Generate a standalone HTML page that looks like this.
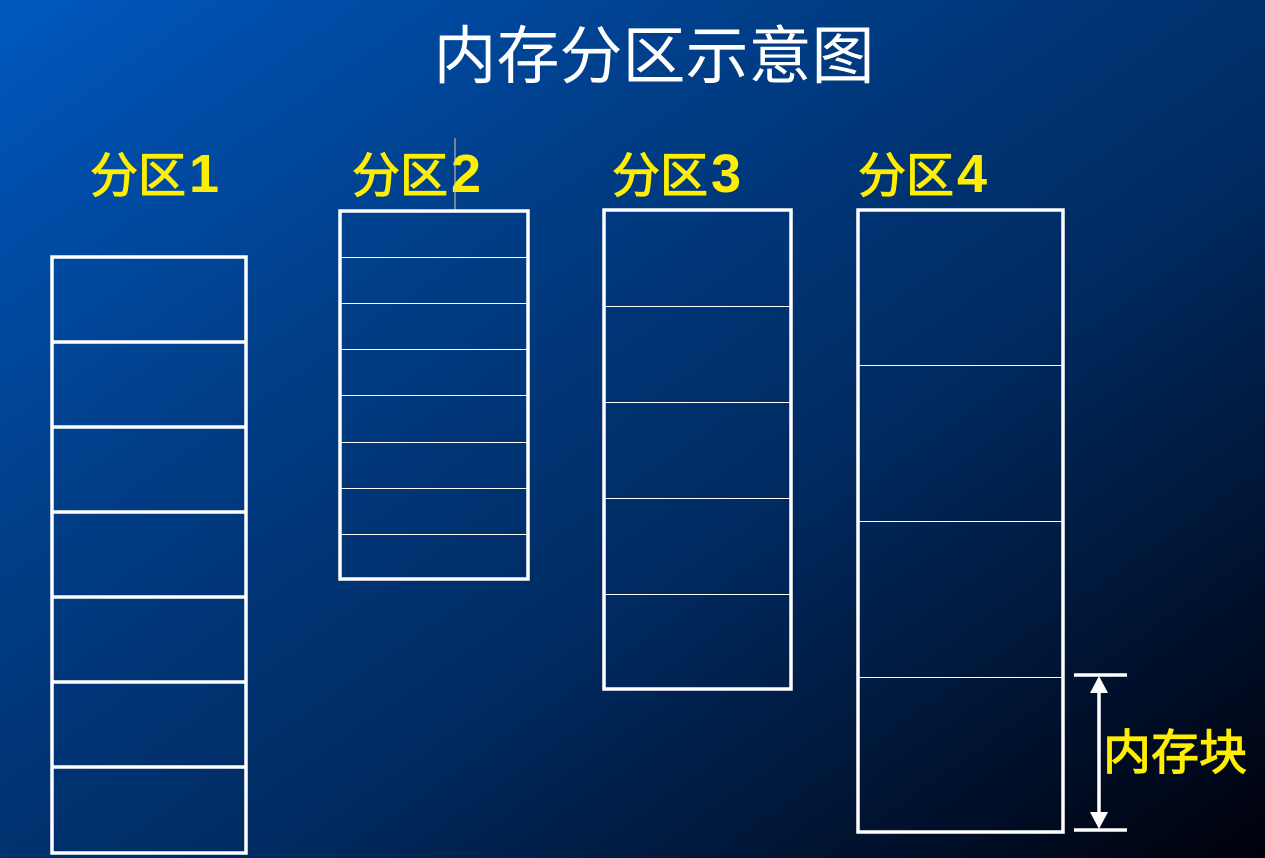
<!DOCTYPE html>
<html><head><meta charset="utf-8"><style>
html,body{margin:0;padding:0;}
body{width:1265px;height:858px;overflow:hidden;background:linear-gradient(145deg,#0058bf 0%,#003f8a 30%,#002a60 60%,#00000a 100%);}
svg{display:block}
.t{font-family:"Liberation Sans","Noto Sans CJK SC",sans-serif;}
</style></head><body>
<svg width="1265" height="858" xmlns="http://www.w3.org/2000/svg">
<text class="t" x="654" y="78" fill="#fff" font-size="63" text-anchor="middle">内存分区示意图</text>
<g class="t" fill="#ffee00" stroke="#ffee00" stroke-width="1.2" font-size="48">
<text x="90" y="192">分区<tspan font-weight="bold" stroke="none" font-size="54" dx="3">1</tspan></text>
<text x="352" y="192">分区<tspan font-weight="bold" stroke="none" font-size="54" dx="3">2</tspan></text>
<text x="612" y="192">分区<tspan font-weight="bold" stroke="none" font-size="54" dx="3">3</tspan></text>
<text x="858" y="192">分区<tspan font-weight="bold" stroke="none" font-size="54" dx="3">4</tspan></text>
<text x="1103" y="769" font-size="48">内存块</text>
</g>
<line x1="455" y1="138" x2="455" y2="212" stroke="#e6c9a0" stroke-width="1"/>
<g fill="none" stroke="#fff">
<rect x="52" y="257" width="194" height="596" stroke-width="3.5"/>
<path d="M52 342H246M52 427H246M52 512H246M52 597H246M52 682H246M52 767H246" stroke-width="3.5"/>
<rect x="340" y="211" width="188" height="368" stroke-width="3.5"/>
<path d="M340 257.5H528M340 303.5H528M340 349.5H528M340 395.5H528M340 442.5H528M340 488.5H528M340 534.5H528" stroke-width="1"/>
<rect x="604" y="210" width="187" height="479" stroke-width="3.5"/>
<path d="M604 306.5H791M604 402.5H791M604 498.5H791M604 594.5H791" stroke-width="1"/>
<rect x="858" y="210" width="205" height="622" stroke-width="3.5"/>
<path d="M858 365.5H1063M858 521.5H1063M858 677.5H1063" stroke-width="1"/>
<path d="M1074 675H1127M1074 830H1127" stroke-width="3.5"/>
<path d="M1099 688V818" stroke-width="3.5"/>
</g>
<path d="M1099 676L1090 693H1108Z M1099 829L1090 812H1108Z" fill="#fff"/>
</svg>
</body></html>
